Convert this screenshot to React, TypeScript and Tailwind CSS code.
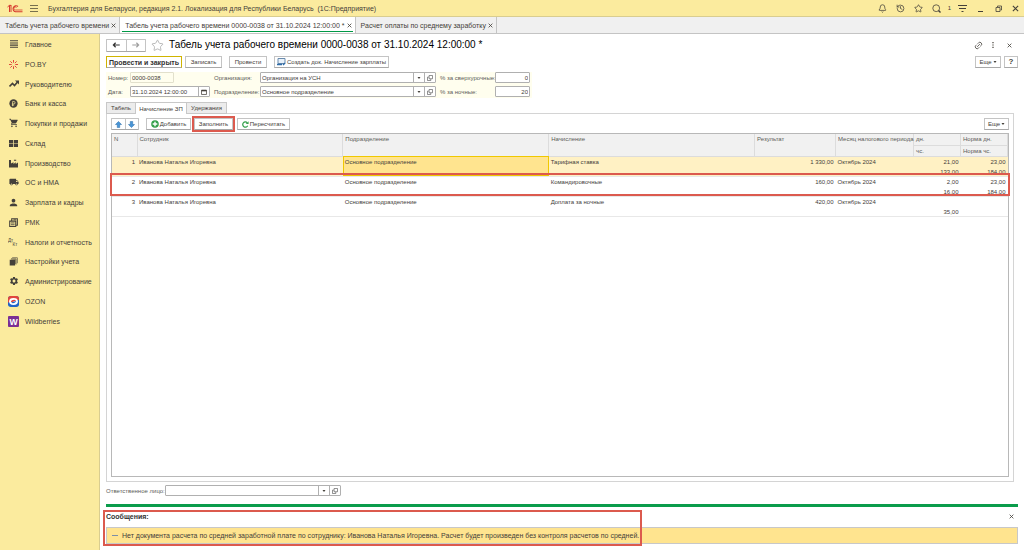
import type { ReactNode } from "react";
import { Bell, History, Link2, Star } from "lucide-react";
import {
  MdLocalShipping,
  MdPerson,
  MdSettings,
  MdShoppingCart,
  MdTrendingUp,
} from "react-icons/md";

const Logo = () => (
  <svg viewBox="0 0 32 18" className="h-[9px] w-4" fill="none" stroke="#d6382d">
    <path d="M1 6 5 2.5V16M8 16V2L4 5" strokeWidth="2" />
    <path d="M22 5a6 6 0 1 0-5 10.5h14" strokeWidth="2.2" />
    <path d="M19 7a3 3 0 1 0-2 5h14" strokeWidth="1.6" />
  </svg>
);

const Lines = () => (
  <svg viewBox="0 0 10 10" className="size-2" stroke="#44403a">
    <path d="M0 1h10M0 3.7h10M0 6.4h10M0 9h10" strokeWidth="1.3" />
  </svg>
);

const Spark = () => (
  <svg viewBox="0 0 10 10" className="size-[9px]" stroke="#dc3030">
    <path
      d="M5 0v3M5 7v3M0 5h3M7 5h3M1.5 1.5l2 2M6.5 6.5l2 2M8.5 1.5l-2 2M3.5 6.5l-2 2"
      strokeWidth="1"
    />
  </svg>
);

const Trend = () => (
  <svg viewBox="0 0 10 10" className="size-[10px]" fill="none" stroke="#44403a">
    <path d="M.5 7.5 3.5 4.5l2 2L8.5 3" strokeWidth="1.6" />
    <path d="M6 1.500h4v4z" fill="#44403a" stroke="none" />
  </svg>
);

const Coin = () => (
  <svg viewBox="0 0 10 10" className="size-[9px]" fill="none">
    <circle cx="5" cy="5" r="4.6" fill="#44403a" />
    <path d="M4 8V2.8h1.4a1.3 1.3 0 0 1 0 2.7H3.2M3.2 6.8h2.5" stroke="#fbeb9e" strokeWidth=".8" />
  </svg>
);

const Boxes = () => (
  <svg viewBox="0 0 10 10" className="size-[9px]" fill="#44403a">
    <path d="M0 1h4.6v3.6H0zM5.4 1H10v3.6H5.4zM0 5.4h4.6V9H0zM5.4 5.4H10V9H5.4z" />
  </svg>
);

const Factory = () => (
  <svg viewBox="0 0 10 10" className="size-[9px]" fill="#44403a">
    <path d="M0 9.5V1h2.2v4L5 3.5v2l2.5-2v2L10 4v5.5z" />
    <path d="M3.5 2h2V.8H8V2H6.5z" />
  </svg>
);

const Register = () => (
  <svg viewBox="0 0 10 10" className="size-[9px]" fill="none" stroke="#44403a">
    <path d="M.8 3.5h6.7v6H.8zM3 3V.8h6.3V8H8" strokeWidth="1.2" />
    <path d="M2.2 5.5h4M2.2 7.5h4M5 2h3" strokeWidth="1" />
  </svg>
);

const DebitCredit = () => (
  <svg viewBox="0 0 12 12" className="size-[11px]" fill="#44403a">
    <text x="0" y="5" fontSize="5" fontFamily="Liberation Sans, sans-serif">Дт</text>
    <text x="5" y="10" fontSize="5" fontFamily="Liberation Sans, sans-serif">Кт</text>
  </svg>
);

const Books = () => (
  <svg viewBox="0 0 10 10" className="size-[9px]" fill="#44403a">
    <path d="M3.5.5h6V7h-.7V1.2H3.5zM2.200 1.700h6v6.500h-.7V2.400H2.200zM.8 3h6v6.500h-6z" />
    <path d="M2.500 2.800h4.800v5h-.5V3z" />
  </svg>
);

const Ozon = () => (
  <svg viewBox="0 0 12 12" className="size-[11px]">
    <rect width="12" height="12" rx="3" fill="#2264c8" />
    <path d="M0 7V3a3 3 0 0 1 3-3h6a3 3 0 0 1 3 3v1z" fill="#e2463c" />
    <ellipse cx="6" cy="6" rx="4.8" ry="3.8" fill="#fff" />
    <path d="M3.2 6.5c0-2 4-3.2 5.6-1.5L5 6.5z" fill="#e2463c" />
    <path d="M8.8 5.5c0 2-4 3.2-5.4 1.5L7 6z" fill="#2264c8" />
  </svg>
);

const Wildberries = () => (
  <svg viewBox="0 0 12 12" className="size-[11px]">
    <rect width="12" height="12" rx="1" fill="#7b2f93" />
    <text x="6" y="9.5" fontSize="9.5" fontWeight="bold" textAnchor="middle" fill="#fff" fontFamily="Liberation Sans, sans-serif">
      W
    </text>
  </svg>
);

const Magnifier = () => (
  <svg viewBox="0 0 9 9" className="size-[9px]" fill="none" stroke="#44403a">
    <circle cx="4.2" cy="4.2" r="3.4" strokeWidth=".8" />
    <path d="m6.500 6.500 2 2" strokeWidth="1.4" />
  </svg>
);

const Cross = ({ className }: { className?: string }) => (
  <svg viewBox="0 0 8 8" className={className} fill="none" stroke="currentColor">
    <path d="m1 1 6 6M7 1 1 7" strokeWidth="1.3" />
  </svg>
);

const Arrow = ({ className }: { className?: string }) => (
  <svg viewBox="0 0 10 8" className={className} fill="none" stroke="currentColor">
    <path d="M10 4H1.5M4.5 1l-3 3 3 3" strokeWidth="1.6" />
  </svg>
);

const BlueArrow = ({ className }: { className?: string }) => (
  <svg viewBox="0 0 8 8" className={className}>
    <path d="M4 .5 7.5 4H5.4v3.5H2.6V4H.5z" fill="#4795d8" stroke="#2c6da8" strokeWidth=".6" />
  </svg>
);

const Caret = () => (
  <svg viewBox="0 0 6 4" className="h-[2px] w-[4px]" fill="#44403a">
    <path d="M0 0h6L3 4z" />
  </svg>
);

const OpenIcon = () => (
  <svg viewBox="0 0 10 10" className="size-[6px]" fill="none" stroke="#555">
    <path d="M3.5.8h5.7v5.4H3.5zM3 3.5H.8v5.7h5.5V6.7" strokeWidth="1.1" />
  </svg>
);

const menu = [
  { title: "Главное", icon: <Lines /> },
  { title: "PO.BY", icon: <Spark /> },
  { title: "Руководителю", icon: <Trend /> },
  { title: "Банк и касса", icon: <Coin /> },
  { title: "Покупки и продажи", icon: <MdShoppingCart className="size-[10px]" /> },
  { title: "Склад", icon: <Boxes /> },
  { title: "Производство", icon: <Factory /> },
  { title: "ОС и НМА", icon: <MdLocalShipping className="size-[10px]" /> },
  { title: "Зарплата и кадры", icon: <MdPerson className="size-[11px]" /> },
  { title: "РМК", icon: <Register /> },
  { title: "Налоги и отчетность", icon: <DebitCredit /> },
  { title: "Настройки учета", icon: <Books /> },
  { title: "Администрирование", icon: <MdSettings className="size-[10px]" /> },
  { title: "OZON", icon: <Ozon /> },
  { title: "Wildberries", icon: <Wildberries /> },
];

const rows = [
  { n: 1, accrual: "Тарифная ставка", sum: "1 330,00", days: "21,00", hours: "133,00", normDays: "23,00", normHours: "184,00" },
  { n: 2, accrual: "Командировочные", sum: "160,00", days: "2,00", hours: "16,00", normDays: "23,00", normHours: "184,00" },
  { n: 3, accrual: "Доплата за ночные", sum: "420,00", days: "", hours: "35,00", normDays: "", normHours: "" },
];

const Button = ({ children, className = "" }: { children: ReactNode; className?: string }) => (
  <button
    className={`flex h-3 items-center justify-center gap-px border border-[#c4c4c4] border-b-[#a8a8a8] bg-white whitespace-nowrap ${className}`}
  >
    {children}
  </button>
);

const Picker = ({ id, value, className = "" }: { id: string; value: string; className?: string }) => (
  <div className={`flex h-[11px] rounded-[1px] border border-[#b0b0b0] bg-white ${className}`}>
    <input id={id} defaultValue={value} className="w-full min-w-0 flex-1 px-px outline-none" />
    <button aria-label="Выбрать" className="flex w-[11px] items-center justify-center border-l border-[#b0b0b0]">
      <Caret />
    </button>
    <button aria-label="Открыть" className="flex w-[11px] items-center justify-center border-l border-[#b0b0b0]">
      <OpenIcon />
    </button>
  </div>
);

const TitleBar = () => (
  <header className="flex h-[17px] items-center border-b border-[#d9cd90] bg-[#fbeb9e] pr-[5px] pl-[7px] text-[7px]">
    <Logo />
    <button aria-label="Меню" className="ml-[7px]">
      <svg viewBox="0 0 8 8" className="size-2" stroke="#55503a">
        <path d="M0 1.5h8M0 4.5h8M0 7.5h8" strokeWidth=".8" />
      </svg>
    </button>
    <span className="ml-[10px] flex-1 whitespace-pre">
      Бухгалтерия для Беларуси, редакция 2.1. Локализация для Республики Беларусь{"  "}(1С:Предприятие)
    </span>
    <div className="flex items-center gap-[9px]">
      <button aria-label="Уведомления"><Bell className="size-[9px]" /></button>
      <button aria-label="История"><History className="size-[9px]" /></button>
      <button aria-label="Избранное"><Star className="size-[9px]" /></button>
      <button aria-label="Поиск"><Magnifier /></button>
      <span className="-mx-[2px] text-[6px]">1</span>
      <button aria-label="Настройки">
        <svg viewBox="0 0 9 9" className="size-[9px]" stroke="#44403a">
          <path d="M0 1.5h9M1 4.5h7M3.5 7.5h2" />
        </svg>
      </button>
      <button aria-label="Свернуть">
        <svg viewBox="0 0 9 9" className="size-[9px]" stroke="#44403a">
          <path d="M2 7.5h5" />
        </svg>
      </button>
      <button aria-label="Развернуть">
        <svg viewBox="0 0 9 9" className="size-[9px]" fill="none" stroke="#44403a">
          <path d="M2 3.5h4v4H2zM3.5 3V2h4v4h-1" strokeWidth=".8" />
        </svg>
      </button>
      <button aria-label="Закрыть"><Cross className="size-[7px]" /></button>
    </div>
  </header>
);

const WindowTabs = () => (
  <nav className="flex h-[17px] border-b border-[#c4c4c4] bg-[#f0f0f0] text-[7px]">
    <div className="flex items-center gap-[2px] border-r border-[#c4c4c4] pr-[3px] pl-[5px]">
      <a href="#timesheets">Табель учета рабочего времени</a>
      <button aria-label="Закрыть"><Cross className="size-[5px]" /></button>
    </div>
    <div className="relative flex items-center gap-[2px] border-r border-[#c4c4c4] bg-white pr-[3px] pl-[5px]">
      <a href="#timesheet">Табель учета рабочего времени 0000-0038 от 31.10.2024 12:00:00 *</a>
      <button aria-label="Закрыть"><Cross className="size-[5px]" /></button>
      <span className="absolute inset-x-[2px] bottom-px h-px bg-[#009846]" />
    </div>
    <div className="flex items-center gap-[2px] border-r border-[#c4c4c4] pr-[3px] pl-[5px]">
      <a href="#average">Расчет оплаты по среднему заработку</a>
      <button aria-label="Закрыть"><Cross className="size-[5px]" /></button>
    </div>
  </nav>
);

const Sidebar = () => (
  <aside className="w-[100px] shrink-0 border-r border-[#d9cd90] bg-[#fbeb9e] text-[7px]">
    {menu.map((item) => (
      <a key={item.title} href="#section" className="flex h-5 items-center gap-[6px] pl-2 whitespace-nowrap nth-[4n]:-mt-px">
        <span className="flex w-[11px] justify-center">{item.icon}</span>
        {item.title}
      </a>
    ))}
  </aside>
);

const DocumentForm = () => (
  <div className="mt-1 flex w-fit gap-x-1 bg-[#fffeee] px-[2px] pb-px [&_label]:text-[#5c5c58]">
    <div className="grid grid-cols-[20px_80px] items-center gap-x-[2px] gap-y-[3px]">
      <label htmlFor="number">Номер:</label>
      <input id="number" defaultValue="0000-0038" className="h-[11px] w-[44px] rounded-[1px] border border-[#e2e0cc] bg-transparent px-px" />
      <label htmlFor="date">Дата:</label>
      <div className="flex h-[11px] rounded-[1px] border border-[#b0b0b0] bg-white">
        <input id="date" defaultValue="31.10.2024 12:00:00" className="min-w-0 flex-1 px-px" />
        <button aria-label="Календарь" className="flex w-[11px] items-center justify-center border-l border-[#b0b0b0]">
          <svg viewBox="0 0 8 8" className="size-[6px]" fill="none" stroke="#44403a">
            <path d="M.7 1.5h6.6v5.8H.7z" />
            <path d="M.7 2.2h6.6" strokeWidth="1.8" />
          </svg>
        </button>
      </div>
    </div>
    <div className="grid grid-cols-[45px_176px] items-center gap-x-px gap-y-[3px]">
      <label htmlFor="organization">Организация:</label>
      <Picker id="organization" value="Организация на УСН" />
      <label htmlFor="department">Подразделение:</label>
      <Picker id="department" value="Основное подразделение" />
    </div>
    <div className="grid grid-cols-[54px_35px] items-center gap-x-px gap-y-[3px] whitespace-nowrap">
      <label htmlFor="overtime">% за сверхурочные:</label>
      <input id="overtime" defaultValue="0" className="h-[11px] rounded-[1px] border border-[#b0b0b0] bg-white px-px text-right" />
      <label htmlFor="night">% за ночные:</label>
      <input id="night" defaultValue="20" className="h-[11px] rounded-[1px] border border-[#b0b0b0] bg-white px-px text-right" />
    </div>
  </div>
);

const AccrualTable = () => (
  <div className="mt-[3px] flex-1 border border-[#b8b8b8] bg-white">
    <table className="w-full table-fixed border-collapse text-left leading-[10px]">
      <colgroup>
        <col className="w-[25px]" />
        <col />
        <col />
        <col />
        <col className="w-[81px]" />
        <col className="w-[78px]" />
        <col className="w-[47px]" />
        <col className="w-[47px]" />
      </colgroup>
      <thead className="bg-[#f1f1f1] align-top text-[#5c5c58] [&_th]:border-r [&_th]:border-b [&_th]:border-[#dcdcdc] [&_th]:px-[2px] [&_th]:font-normal [&_th]:whitespace-nowrap">
        <tr className="h-[11px]">
          <th rowSpan={2}>N</th>
          <th rowSpan={2}>Сотрудник</th>
          <th rowSpan={2}>Подразделение</th>
          <th rowSpan={2}>Начисление</th>
          <th rowSpan={2}>Результат</th>
          <th rowSpan={2}>Месяц налогового периода</th>
          <th>дн.</th>
          <th>Норма дн.</th>
        </tr>
        <tr className="h-[11px]">
          <th>чс.</th>
          <th>Норма чс.</th>
        </tr>
      </thead>
      <tbody className="align-top">
        {rows.map((row) => (
          <tr
            key={row.n}
            className="relative h-5 border-b border-[#e8e8e8] first:bg-[#fff1c4] [&>td]:px-[2px]"
          >
            <td className="text-right">{row.n}</td>
            <td>Иванова Наталья Игоревна</td>
            <td className={row.n === 1 ? "bg-[#ffe48f] outline -outline-offset-1 outline-[#f0c800]" : ""}>
              Основное подразделение
            </td>
            <td>{row.accrual}</td>
            <td className="text-right">{row.sum}</td>
            <td>Октябрь 2024</td>
            <td className="text-right">
              <div className="h-[10px]">{row.days}</div>
              <div className="h-[9px]">{row.hours}</div>
            </td>
            <td className="text-right">
              <div className="h-[10px]">{row.normDays}</div>
              <div className="h-[9px]">{row.normHours}</div>
              {row.n === 2 && (
                <span className="absolute -inset-x-[2px] -top-[3px] -bottom-px border-2 border-[#dc5a4e]" />
              )}
            </td>
          </tr>
        ))}
      </tbody>
    </table>
  </div>
);

const Messages = () => (
  <section className="relative mt-[3px] pb-[6px]">
    <div className="flex h-3 items-center justify-between">
      <h2 className="text-[7px] font-bold text-[#333]">Сообщения:</h2>
      <button aria-label="Закрыть" className="mr-1"><Cross className="size-[5px]" /></button>
    </div>
    <div className="mt-[5px] flex h-[17px] items-center gap-1 border border-[#c8c8c8] bg-[#ffe48f] pl-[5px] text-[7px]">
      <span className="h-px w-[6px] bg-[#7c8fa8]" />
      Нет документа расчета по средней заработной плате по сотруднику: Иванова Наталья Игоревна. Расчет будет произведен без контроля расчетов по средней.
    </div>
    <span className="pointer-events-none absolute top-0 bottom-1 -left-[3px] w-[539px] border-2 border-[#dc5a4e]" />
  </section>
);

const App = () => {
  return (
    <div className="flex min-h-screen flex-col bg-white font-['Liberation_Sans',Arial,sans-serif] text-[6px] leading-none text-[#44403a]">
      <TitleBar />
      <WindowTabs />
      <div className="flex flex-1">
        <Sidebar />
        <main className="flex min-w-0 flex-1 flex-col px-[6px] pt-1">
          <div className="flex h-[14px] items-center">
            <div className="flex h-[13px] w-10 rounded-[1px] border border-[#c4c4c4] border-b-[#a8a8a8]">
              <button aria-label="Назад" className="flex flex-1 items-center justify-center border-r border-[#c4c4c4] text-[#333]">
                <Arrow className="h-[6px] w-2" />
              </button>
              <button aria-label="Вперед" className="flex flex-1 items-center justify-center text-[#a0a0a0]">
                <Arrow className="h-[6px] w-2 rotate-180" />
              </button>
            </div>
            <button aria-label="В избранное" className="ml-[5px] text-[#aaa]">
              <Star className="size-[13px]" strokeWidth={1.5} />
            </button>
            <h1 className="ml-[5px] flex-1 text-[10px] text-black">
              Табель учета рабочего времени 0000-0038 от 31.10.2024 12:00:00 *
            </h1>
            <div className="mr-[6px] flex items-center gap-[9px]">
              <button aria-label="Ссылка"><Link2 className="size-[9px] -rotate-45" /></button>
              <button aria-label="Еще действия">
                <svg viewBox="0 0 2 8" className="h-[6px] w-[2px]" fill="#66625c">
                  <path d="M0 0h2v1.6H0zM0 3.2h2v1.6H0zM0 6.4h2V8H0z" />
                </svg>
              </button>
              <button aria-label="Закрыть" className="ml-1"><Cross className="size-[5px]" /></button>
            </div>
          </div>

          <div className="mt-1 flex h-3">
            <Button className="w-[76px] border-[#d0b400] bg-[#fde100] text-[7px] font-bold text-[#333]">Провести и закрыть</Button>
            <Button className="ml-[3px] w-[37px]">Записать</Button>
            <Button className="ml-[7px] w-[38px]">Провести</Button>
            <Button className="ml-[7px] w-[115px]">
              <svg viewBox="0 0 9 8" className="h-2 w-[9px]" fill="none">
                <path d="M1 .5h7v5H1z" fill="#e8f1fa" stroke="#6a8bad" />
                <path d="M0 6.5h5M6 7l2-2" stroke="#2f6ca8" strokeWidth="1.4" />
              </svg>
              Создать док. Начисление зарплаты
            </Button>
            <Button className="mr-[3px] ml-auto w-[26px] gap-[3px]">Еще <Caret /></Button>
            <Button className="w-[14px] text-[8px] font-bold">?</Button>
          </div>

          <DocumentForm />

          <div role="tablist" className="relative z-10 mt-1 -mb-px flex h-3 w-fit border border-[#c8c8c8] bg-[#ececec]">
            <button role="tab" className="w-[29px] border-r border-[#c8c8c8]">Табель</button>
            <button role="tab" aria-selected="true" className="-mb-px w-[51px] border-r border-[#c8c8c8] bg-white">Начисление ЗП</button>
            <button role="tab" className="w-[39px]">Удержания</button>
          </div>
          <section className="mr-1 flex flex-1 flex-col border border-[#d4d4d4] p-1">
            <div className="flex h-3">
              <div className="flex h-3 w-7 rounded-[1px] border border-[#c4c4c4] border-b-[#a8a8a8]">
                <button aria-label="Вверх" className="flex flex-1 items-center justify-center border-r border-[#c4c4c4]">
                  <BlueArrow className="size-[7px]" />
                </button>
                <button aria-label="Вниз" className="flex flex-1 items-center justify-center">
                  <BlueArrow className="size-[7px] rotate-180" />
                </button>
              </div>
              <Button className="ml-[7px] w-[45px]">
                <svg viewBox="0 0 8 8" className="size-2">
                  <circle cx="4" cy="4" r="3.8" fill="#35a04b" />
                  <path d="M4 1.7v4.6M1.7 4h4.6" stroke="#fff" strokeWidth="1.4" />
                </svg>
                Добавить
              </Button>
              <Button className="ml-[3px] w-[39px] outline-2 outline-[#dc5a4e]">Заполнить</Button>
              <Button className="ml-1 w-[53px] gap-[2px]">
                <svg viewBox="0 0 8 8" className="size-[7px]" fill="none">
                  <path d="M6.5 5.5A3 3 0 1 1 6 2" stroke="#35a04b" strokeWidth="1.4" />
                  <path d="M7.5.3v3.2H4.3z" fill="#35a04b" />
                </svg>
                Пересчитать
              </Button>
              <Button className="ml-auto w-[25px] gap-[3px]">Еще <Caret /></Button>
            </div>
            <AccrualTable />
          </section>

          <div className="mt-[3px] flex items-center gap-[2px]">
            <label htmlFor="responsible" className="w-[57px] whitespace-nowrap text-[#5c5c58]">Ответственное лицо:</label>
            <Picker id="responsible" value="" className="w-[176px]" />
          </div>
          <div className="mt-2 h-[3px] bg-[#0a9c4b]" />
          <Messages />
        </main>
      </div>
    </div>
  );
};

export default App;
